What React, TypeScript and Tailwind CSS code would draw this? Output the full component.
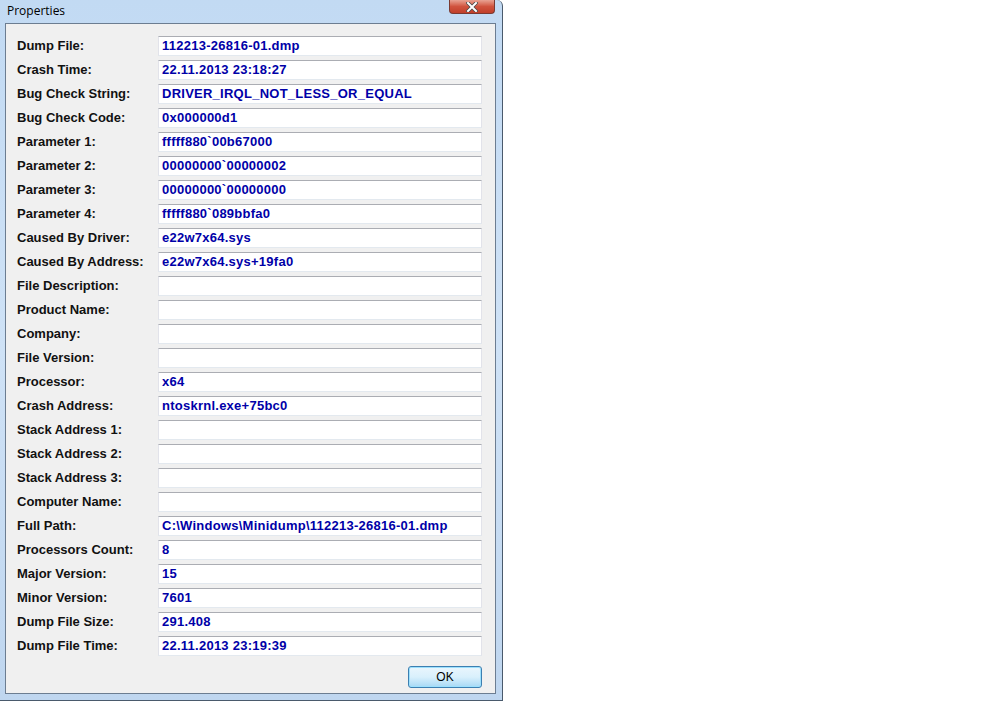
import React from "react";

const rows: [string, string][] = [
  ["Dump File:", "112213-26816-01.dmp"],
  ["Crash Time:", "22.11.2013 23:18:27"],
  ["Bug Check String:", "DRIVER_IRQL_NOT_LESS_OR_EQUAL"],
  ["Bug Check Code:", "0x000000d1"],
  ["Parameter 1:", "fffff880`00b67000"],
  ["Parameter 2:", "00000000`00000002"],
  ["Parameter 3:", "00000000`00000000"],
  ["Parameter 4:", "fffff880`089bbfa0"],
  ["Caused By Driver:", "e22w7x64.sys"],
  ["Caused By Address:", "e22w7x64.sys+19fa0"],
  ["File Description:", ""],
  ["Product Name:", ""],
  ["Company:", ""],
  ["File Version:", ""],
  ["Processor:", "x64"],
  ["Crash Address:", "ntoskrnl.exe+75bc0"],
  ["Stack Address 1:", ""],
  ["Stack Address 2:", ""],
  ["Stack Address 3:", ""],
  ["Computer Name:", ""],
  ["Full Path:", "C:\\Windows\\Minidump\\112213-26816-01.dmp"],
  ["Processors Count:", "8"],
  ["Major Version:", "15"],
  ["Minor Version:", "7601"],
  ["Dump File Size:", "291.408"],
  ["Dump File Time:", "22.11.2013 23:19:39"],
];

export default function App() {
  return (
    <div className="w-[1008px] h-[701px] bg-white overflow-hidden">
      {/* window frame */}
      <div className="w-[503px] h-[701px] flex flex-col bg-gradient-to-b from-[#c2daf3] via-[#cfe2f6] to-[#bfd6ef] border-r border-b border-[#4a5a6c] rounded-tr-[6px]">
        {/* title bar */}
        <div className="relative h-[23px] shrink-0 flex items-center pl-[7px]">
          <span className="text-[12px] text-black font-['Open_Sans',sans-serif] leading-none -mt-[2px]">
            Properties
          </span>
          <div className="absolute top-0 right-[7px] w-[46px] h-[14px] rounded-b-[4px] border border-t-0 border-[#7a3a32] bg-gradient-to-b from-[#e8a293] via-[#d0533e] to-[#c13f2a] flex items-center justify-center">
            <svg width="12" height="10" viewBox="0 0 12 10">
              <path d="M2 1 L10 9 M10 1 L2 9" stroke="#4a4a4a" strokeWidth="3.6" strokeLinecap="square" />
              <path d="M2 1 L10 9 M10 1 L2 9" stroke="#ffffff" strokeWidth="2" strokeLinecap="square" />
            </svg>
          </div>
        </div>

        {/* client area */}
        <div className="ml-[5px] mr-[6px] mb-[6px] flex-1 bg-[#f0f0f0] border border-[#6c7d91] pt-[12px] pl-[11px] flex flex-col">
          <div className="grid grid-cols-[141px_324px] gap-y-[4px] font-['Liberation_Sans',Arial,sans-serif] font-bold text-[13px]">
            {rows.map(([label, value]) => (
              <React.Fragment key={label}>
                <div className="h-[20px] flex items-center text-[#111]">{label}</div>
                <div className="h-[20px] bg-white border border-[#e2e3ea] border-t-[#abadb3] border-b-[#e3e9ef] pl-[3px] flex items-center text-[#0000a8] tracking-[0.25px] whitespace-nowrap overflow-hidden">
                  {value}
                </div>
              </React.Fragment>
            ))}
          </div>
          <div className="flex justify-end mt-[10px] pr-[13px]">
            <button className="w-[74px] h-[22px] rounded-[3px] border border-[#3c7fb1] bg-gradient-to-b from-[#eaf6fd] via-[#d9f0fc] to-[#a7d9f5] shadow-[inset_0_0_0_1px_#9ce0fd] text-[12px] text-black font-['Liberation_Sans',Arial,sans-serif]">
              OK
            </button>
          </div>
        </div>
      </div>
    </div>
  );
}
